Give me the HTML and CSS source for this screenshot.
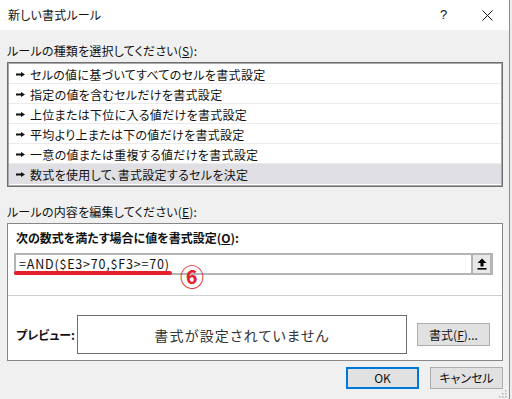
FILE: index.html
```html
<!DOCTYPE html>
<html lang="ja">
<head>
<meta charset="utf-8">
<title>新しい書式ルール</title>
<link rel="stylesheet" href="styles.css">
</head>
<body>
<div class="dialog">
  <div class="titlebar">
    <span class="title">新しい書式ルール</span>
    <span class="help">?</span>
    <svg class="close" width="11" height="11" viewBox="0 0 11 11"><path d="M0.5 0.5 L10.5 10.5 M10.5 0.5 L0.5 10.5" stroke="#111" stroke-width="1" fill="none"/></svg>
  </div>
  <div class="content">
    <div class="label">ルールの種類を選択してください(<u>S</u>):</div>
    <div class="list">
      <div class="row"><svg class="ptr" width="9" height="5" viewBox="0 0 9 5"><path d="M0 1.5 H5 V0 L9 2.5 L5 5 V3.5 H0 Z" fill="#111"/></svg>セルの値に基づいてすべてのセルを書式設定</div>
      <div class="row"><svg class="ptr" width="9" height="5" viewBox="0 0 9 5"><path d="M0 1.5 H5 V0 L9 2.5 L5 5 V3.5 H0 Z" fill="#111"/></svg>指定の値を含むセルだけを書式設定</div>
      <div class="row"><svg class="ptr" width="9" height="5" viewBox="0 0 9 5"><path d="M0 1.5 H5 V0 L9 2.5 L5 5 V3.5 H0 Z" fill="#111"/></svg>上位または下位に入る値だけを書式設定</div>
      <div class="row"><svg class="ptr" width="9" height="5" viewBox="0 0 9 5"><path d="M0 1.5 H5 V0 L9 2.5 L5 5 V3.5 H0 Z" fill="#111"/></svg>平均より上または下の値だけを書式設定</div>
      <div class="row"><svg class="ptr" width="9" height="5" viewBox="0 0 9 5"><path d="M0 1.5 H5 V0 L9 2.5 L5 5 V3.5 H0 Z" fill="#111"/></svg>一意の値または重複する値だけを書式設定</div>
      <div class="row selected"><svg class="ptr" width="9" height="5" viewBox="0 0 9 5"><path d="M0 1.5 H5 V0 L9 2.5 L5 5 V3.5 H0 Z" fill="#111"/></svg>数式を使用して、書式設定するセルを決定</div>
    </div>
    <div class="label label2">ルールの内容を編集してください(<u>E</u>):</div>
    <div class="editbox">
      <div class="formula-section">
        <div class="bold-label">次の数式を満たす場合に値を書式設定(<u>O</u>):</div>
        <div class="input">
          <span class="formula">=AND($E3&gt;70,$F3&gt;=70)</span>
          <span class="collapse">
            <svg width="10" height="12" viewBox="0 0 10 12"><path d="M5 0.5 L9.5 5 H6.5 V8.5 H3.5 V5 H0.5 Z" fill="#000"/><rect x="0.5" y="10" width="9" height="1.6" fill="#000"/></svg>
          </span>
          <span class="mark-line"></span>
          <span class="mark-num">⑥</span>
        </div>
      </div>
      <div class="sep"></div>
      <div class="preview-row">
        <span class="bold-label">プレビュー:</span>
        <div class="preview">書式が設定されていません</div>
        <button class="btn fmt">書式(<u>F</u>)...</button>
      </div>
    </div>
    <div class="footer">
      <button class="btn ok">OK</button>
      <button class="btn">キャンセル</button>
    </div>
    <svg class="grip" width="9" height="9" viewBox="0 0 9 9">
      <g fill="#b4b4b4"><rect x="7" y="1" width="1.5" height="1.5"/><rect x="4" y="4" width="1.5" height="1.5"/><rect x="7" y="4" width="1.5" height="1.5"/><rect x="1" y="7" width="1.5" height="1.5"/><rect x="4" y="7" width="1.5" height="1.5"/><rect x="7" y="7" width="1.5" height="1.5"/></g>
    </svg>
  </div>
</div>
</body>
</html>
```

FILE: styles.css
```css
* { box-sizing: border-box; }
html, body { margin: 0; padding: 0; }
body {
  width: 512px;
  height: 399px;
  overflow: hidden;
  background: #ececec;
  font-family: "Noto Sans CJK JP", "Noto Sans", sans-serif;
  font-size: 12px;
  font-feature-settings: "palt";
  color: #111;
}
u { text-decoration: underline; text-underline-offset: 1px; }

.dialog {
  width: 510px;
  height: 399px;
  border-right: 1px solid #8c8c8c;
  background: #f0f0f0;
  position: relative;
}

.titlebar {
  height: 30px;
  background: #fff;
  display: flex;
  align-items: center;
  padding-left: 8px;
}
.title { flex: 1; font-size: 12px; line-height: 18px; letter-spacing: 0.2px; }
.help { font-size: 13px; width: 6px; margin-right: 36px; line-height: 18px; font-family: "Liberation Sans", sans-serif; }
.close { margin-right: 16px; }

.content {
  padding: 12px 6px 0 7px;
}
.label { line-height: 18px; height: 18px; letter-spacing: 0.2px; }
.label2 { margin-top: 16px; }

.list {
  margin-top: 2px;
  height: 125px;
  background: #fff;
  border: 1px solid #707070;
  box-shadow: inset 0 0 0 1px #a8a8a8;
  padding: 1px 1px 0 1px;
}
.row {
  height: 20px;
  border-bottom: 1px solid #ebebeb;
  display: flex;
  align-items: center;
  padding-left: 7px;
  line-height: 19px;
  padding-top: 1px;
  letter-spacing: 0.3px;
}
.row.selected { background: #dfdfe4; border-bottom-color: transparent; }
.ptr { margin-right: 5px; flex: none; }

.editbox {
  margin-top: 2px;
  height: 138px;
  border: 1px solid #878787;
  background: #fff;
}
.formula-section { padding: 5px 9px 0 6px; }
.bold-label { font-weight: bold; line-height: 18px; padding-left: 2px; }
.input {
  position: relative;
  margin-top: 6px;
  height: 22px;
  border: 2px solid #b4b4b4;
  border-right-width: 1px;
  display: flex;
  align-items: center;
}
.formula {
  flex: 1;
  padding-left: 3px;
  font-family: "Noto Sans CJK JP", sans-serif;
  font-size: 12.5px;
  letter-spacing: 0.8px;
  line-height: 18px;
}
.collapse {
  width: 21px;
  height: 22px;
  margin-top: -2px;
  margin-bottom: -2px;
  background: #e9e9e9;
  border: 2px solid #b4b4b4;
  display: flex;
  align-items: center;
  justify-content: center;
}
.mark-line {
  position: absolute;
  left: -2px;
  top: 16px;
  width: 158px;
  height: 4px;
  border-radius: 2px;
  background: #e51f2a;
}
.mark-num {
  position: absolute;
  left: 164px;
  top: 8px;
  color: #e51f2a;
  font-size: 24px;
  line-height: 26px;
  font-weight: bold;
}

.sep { margin-top: 20px; height: 1px; background: #cfcfcf; margin-right: 0; }

.preview-row {
  display: flex;
  align-items: center;
  margin-top: 19px;
  padding-left: 6px;
}
.preview-row .bold-label { width: 63px; }
.preview {
  width: 330px;
  height: 39px;
  border: 1px solid #6d6d6d;
  display: flex;
  align-items: center;
  justify-content: center;
  font-size: 14px;
  letter-spacing: 1.2px;
  color: #333;
}
.btn {
  font-family: "Noto Sans CJK JP", sans-serif;
  font-feature-settings: "palt";
  font-size: 12px;
  color: #111;
  background: #e1e1e1;
  border: 1px solid #adadad;
  width: 73px;
  height: 23px;
  padding: 0;
  line-height: 18px;
}
.fmt { margin-left: 10px; }

.footer {
  display: flex;
  justify-content: flex-end;
  gap: 11px;
  margin-top: 6px;
}
.footer .btn { height: 22px; }
.ok { border: 2px solid #0078d7; }

.grip { position: absolute; right: 2px; bottom: 1px; }
```
